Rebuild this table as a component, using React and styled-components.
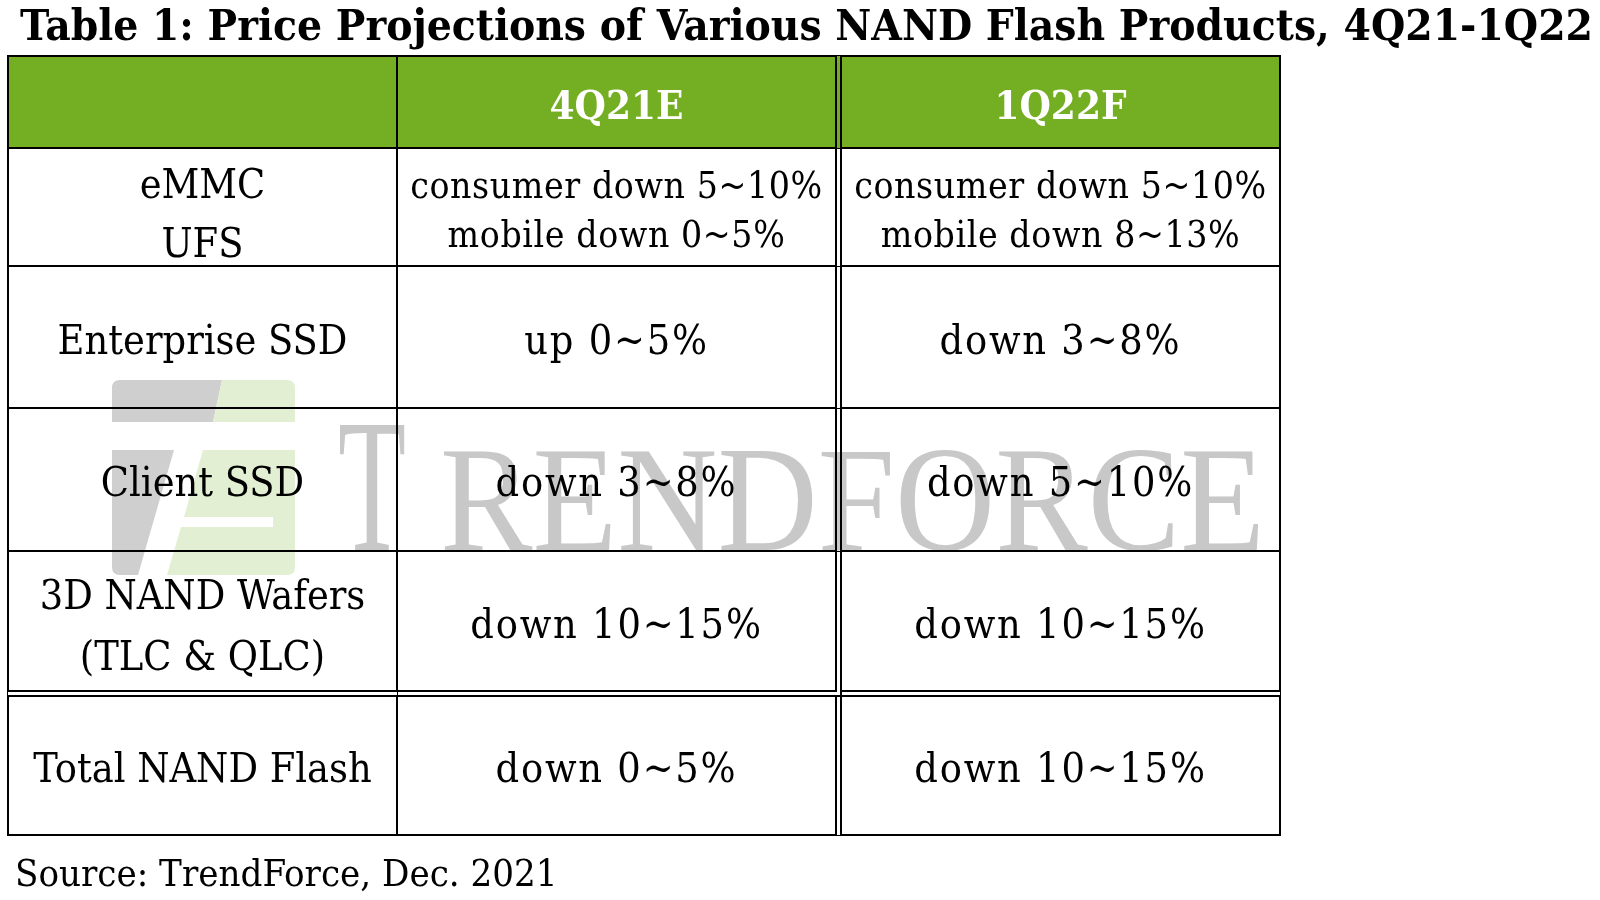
import React from "react";
import styled, { createGlobalStyle } from "styled-components";

const GlobalStyle = createGlobalStyle`
  html, body { margin: 0; padding: 0; background: #ffffff; }
  body {
    font-family: "DejaVu Serif Condensed", "DejaVu Serif", serif;
    font-stretch: semi-condensed;
    color: #000;
  }
  #root { width: 1600px; height: 900px; overflow: hidden; }
`;

const Page = styled.div`
  width: 1600px;
  height: 900px;
  box-sizing: border-box;
  padding-left: 7px;
  display: flex;
  flex-direction: column;
`;

const Title = styled.h1`
  margin: 0 0 6px 13px;
  height: 49px;
  font-size: 43.8px;
  line-height: 49px;
  font-weight: bold;
  white-space: nowrap;
`;

const TableWrap = styled.div`
  position: relative;
  width: 1274px;
`;

const Grid = styled.div`
  display: grid;
  grid-template-columns: 391px 444px 439px;
  grid-template-rows: 94px 118px 142px 143px 145px 139px;
`;

const Cell = styled.div`
  box-sizing: border-box;
  display: flex;
  align-items: center;
  justify-content: center;
  text-align: center;
  white-space: nowrap;
  padding-top: 5px;
  border-right: ${(p) => (p.$doubleRight ? "7px double #000" : "2px solid #000")};
  border-bottom: ${(p) => (p.$doubleBottom ? "7px double #000" : "2px solid #000")};
  border-left: ${(p) => (p.$first ? "2px solid #000" : "none")};
  border-top: ${(p) => (p.$head ? "2px solid #000" : "none")};
  background: ${(p) => (p.$head ? "#74ae22" : "transparent")};
`;

const HeadText = styled.span`
  color: #ffffff;
  font-weight: bold;
  font-size: 40px;
  line-height: 48px;
`;

const Label = styled.div`
  font-size: 41px;
  line-height: ${(p) => p.$lh || 48}px;
  padding-top: ${(p) => p.$pt || 0}px;
`;

const Value = styled.div`
  font-size: 41px;
  line-height: 48px;
  letter-spacing: 1.8px;
`;

const SmallValue = styled.div`
  font-size: 37px;
  line-height: 49px;
  letter-spacing: 0.6px;
`;

const Source = styled.p`
  margin: 13px 0 0 8px;
  font-size: 38px;
  line-height: 48px;
  white-space: nowrap;
`;

const Watermark = styled.svg`
  position: absolute;
  left: 0;
  top: 0;
  pointer-events: none;
  mix-blend-mode: multiply;
`;

const rows = [
  {
    label: ["eMMC", "UFS"],
    labelLh: 59,
    labelPt: 8,
    a: ["consumer down 5~10%", "mobile down 0~5%"],
    b: ["consumer down 5~10%", "mobile down 8~13%"],
  },
  { label: ["Enterprise SSD"], a: "up 0~5%", b: "down 3~8%" },
  { label: ["Client SSD"], a: "down 3~8%", b: "down 5~10%" },
  {
    label: ["3D NAND Wafers", "(TLC & QLC)"],
    labelLh: 61,
    labelPt: 4,
    a: "down 10~15%",
    b: "down 10~15%",
    doubleBottom: true,
  },
  { label: ["Total NAND Flash"], a: "down 0~5%", b: "down 10~15%" },
];

function ValueContent({ v }) {
  if (Array.isArray(v)) {
    return (
      <SmallValue>
        {v.map((line) => (
          <div key={line}>{line}</div>
        ))}
      </SmallValue>
    );
  }
  return <Value>{v}</Value>;
}

function Logo() {
  return (
    <Watermark width="1274" height="781" viewBox="0 0 1274 781">
      <g transform="translate(105 325)">
        <path d="M8 0 H110 L101 42 H0 V8 Q0 0 8 0 Z" fill="#cfcfcf" />
        <path d="M110 0 H175 Q183 0 183 8 V42 H101 Z" fill="#e3efd3" />
        <path d="M0 70 H62 L26 195 H8 Q0 195 0 187 Z" fill="#cfcfcf" />
        <path
          d="M91 70 H183 V187 Q183 195 175 195 H55 L69 147 H161 V137 H72 Z"
          fill="#e3efd3"
        />
      </g>
      <text
        x="331"
        y="495"
        fontFamily="Liberation Serif"
        fontSize="190"
        fill="#c8c8c8"
        textLength="68"
        lengthAdjust="spacingAndGlyphs"
      >
        T
      </text>
      <text
        x="433"
        y="495"
        fontFamily="Liberation Serif"
        fontSize="150"
        fill="#c8c8c8"
        textLength="825"
        lengthAdjust="spacingAndGlyphs"
      >
        RENDFORCE
      </text>
    </Watermark>
  );
}

export default function App() {
  return (
    <>
      <GlobalStyle />
      <Page>
        <Title>Table 1: Price Projections of Various NAND Flash Products, 4Q21-1Q22</Title>
        <TableWrap>
          <Grid>
            <Cell $head $first />
            <Cell $head $doubleRight>
              <HeadText>4Q21E</HeadText>
            </Cell>
            <Cell $head>
              <HeadText>1Q22F</HeadText>
            </Cell>
            {rows.map((r, i) => (
              <React.Fragment key={i}>
                <Cell $first $doubleBottom={r.doubleBottom}>
                  <Label $lh={r.labelLh} $pt={r.labelPt}>
                    {r.label.map((l) => (
                      <div key={l}>{l}</div>
                    ))}
                  </Label>
                </Cell>
                <Cell $doubleRight $doubleBottom={r.doubleBottom}>
                  <ValueContent v={r.a} />
                </Cell>
                <Cell $doubleBottom={r.doubleBottom}>
                  <ValueContent v={r.b} />
                </Cell>
              </React.Fragment>
            ))}
          </Grid>
          <Logo />
        </TableWrap>
        <Source>Source: TrendForce, Dec. 2021</Source>
      </Page>
    </>
  );
}
